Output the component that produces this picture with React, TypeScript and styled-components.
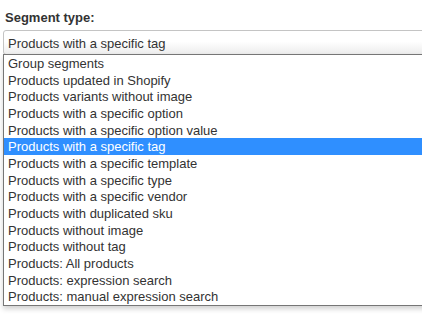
import styled, { createGlobalStyle } from "styled-components";
import type { FunctionComponent } from "react";

// Global page reset
const GlobalStyle = createGlobalStyle`
    html, body {
        margin: 0;
        padding: 0;
        background: #ffffff;
        overflow: hidden;
    }
    body {
        font-family: "Liberation Sans", Arial, sans-serif;
    }
`;

const Page = styled.main`
    width: 422px;
    height: 316px;
    padding: 10px 0 0 3px;
    box-sizing: border-box;
    overflow: hidden;
`;

const FieldLabel = styled.label`
    display: block;
    height: 15px;
    padding-left: 2px;
    font-size: 13px;
    font-weight: bold;
    line-height: 15px;
    color: #333333;
`;

const SelectWrap = styled.div`
    position: relative;
    margin-top: 5px;
    width: 460px;
`;

const SelectBox = styled.div`
    height: 25px;
    box-sizing: border-box;
    border: 1px solid #c4c4c4;
    border-radius: 3px;
    padding-left: 4px;
    background: linear-gradient(to bottom, #ffffff 0%, #ffffff 45%, #ececec 100%);
    font-size: 13px;
    line-height: 25px;
    color: #333333;
`;

const OptionList = styled.ul`
    position: absolute;
    top: 24px;
    left: 0;
    width: 100%;
    margin: 0;
    padding: 0;
    list-style: none;
    background: #ffffff;
    border: 1px solid #767676;
    box-sizing: border-box;
    box-shadow: 0 3px 5px rgba(0, 0, 0, 0.18);
`;

const OptionItem = styled.li<{ $active?: boolean }>`
    height: 16.67px;
    padding-left: 4px;
    font-size: 13px;
    line-height: 18.5px;
    white-space: nowrap;
    overflow: hidden;
    color: ${(p) => (p.$active ? "#ffffff" : "#333333")};
    background: ${(p) => (p.$active ? "#2f8fff" : "transparent")};
`;

const options = [
    "Group segments",
    "Products updated in Shopify",
    "Products variants without image",
    "Products with a specific option",
    "Products with a specific option value",
    "Products with a specific tag",
    "Products with a specific template",
    "Products with a specific type",
    "Products with a specific vendor",
    "Products with duplicated sku",
    "Products without image",
    "Products without tag",
    "Products: All products",
    "Products: expression search",
    "Products: manual expression search",
];

const selected = "Products with a specific tag";

const App: FunctionComponent = () => {
    return (
        <>
            <GlobalStyle />
            <Page>
                <FieldLabel>Segment type:</FieldLabel>
                <SelectWrap>
                    <SelectBox>{selected}</SelectBox>
                    <OptionList>
                        {options.map((o) => (
                            <OptionItem key={o} $active={o === selected}>
                                {o}
                            </OptionItem>
                        ))}
                    </OptionList>
                </SelectWrap>
            </Page>
        </>
    );
};

export default App;
